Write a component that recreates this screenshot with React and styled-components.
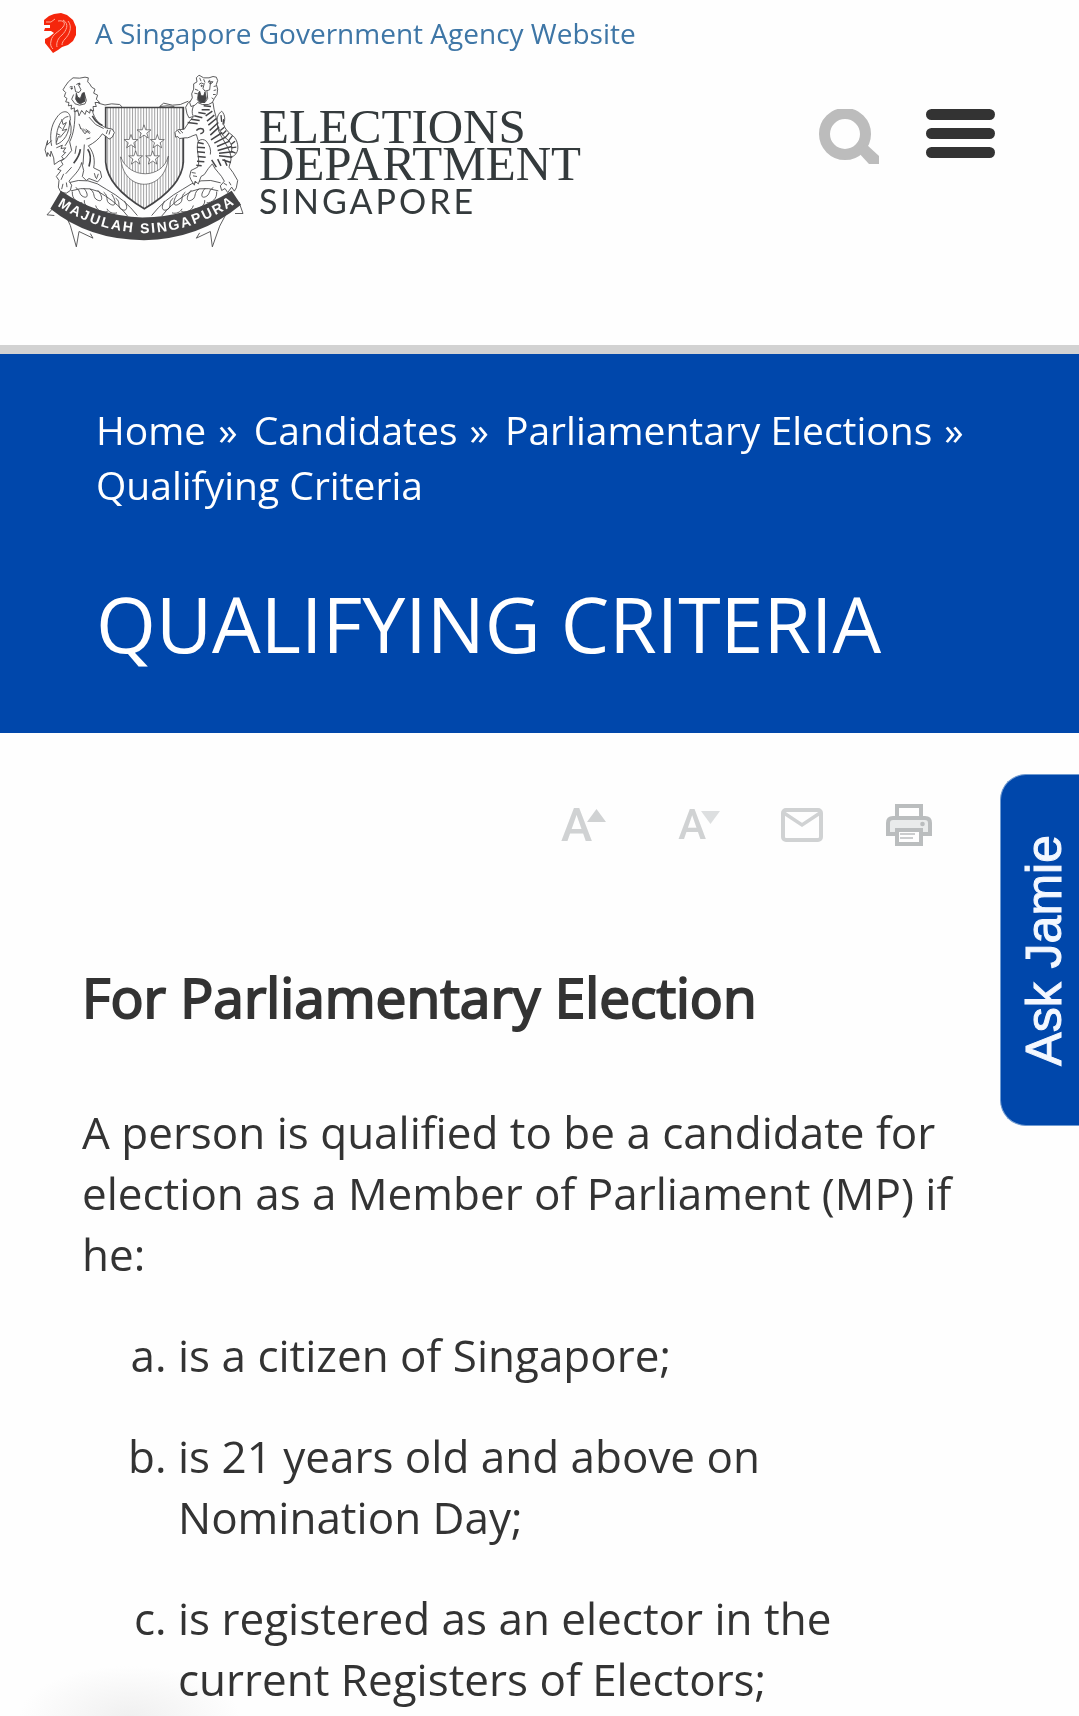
import React from "react";
import styled, { createGlobalStyle } from "styled-components";

const GlobalStyle = createGlobalStyle`
  *, *::before, *::after { box-sizing: border-box; }
  body {
    margin: 0;
    background: #fefefe;
    color: #333;
    font-family: "Open Sans", "Noto Sans", sans-serif;
  }
`;

const Header = styled.header`
  display: flex;
  flex-direction: column;
  height: 354px;
  border-bottom: 9px solid #d2d2d2;
  padding: 0 84px 0 43px;
`;

const AgencyLink = styled.a`
  display: flex;
  align-items: center;
  align-self: flex-start;
  gap: 18px;
  height: 66px;
  color: #3e76a6;
  font-size: 28px;
  text-decoration: none;
`;

const Brand = styled.div`
  display: flex;
  align-items: flex-start;
  justify-content: space-between;
  padding-top: 8px;
`;

const Logo = styled.a`
  display: flex;
  align-items: flex-start;
  gap: 14px;
  color: #343a3c;
  text-decoration: none;
`;

const Wordmark = styled.span`
  display: flex;
  flex-direction: column;
  padding-top: 34px;
  font-family: "Liberation Serif", serif;
  font-size: 49px;
  line-height: 37px;
`;

const Country = styled.span`
  padding-top: 3px;
  font-family: Lato, sans-serif;
  font-size: 34px;
  line-height: 32px;
  letter-spacing: 3px;
`;

const HeaderActions = styled.div`
  display: flex;
  align-items: flex-start;
  gap: 46px;
  padding-top: 35px;
`;

const IconButton = styled.button`
  display: flex;
  align-items: center;
  border: 0;
  padding: 0;
  background: none;
  color: ${(p) => p.$color || "inherit"};
  cursor: pointer;
`;

const Banner = styled.section`
  background: #0047ab;
  color: #fff;
  padding: 48px 96px 67px;
`;

const Crumbs = styled.ol`
  margin: 0;
  padding: 0;
  list-style: none;
  font-size: 39px;
  line-height: 55px;
`;

const Crumb = styled.li`
  display: inline;

  &:not(:last-child)::after {
    content: "»";
    margin: 0 6px 0 12px;
  }

  a {
    color: inherit;
    text-decoration: none;
  }
`;

const Title = styled.h1`
  margin: 70px 0 0;
  font-size: 77px;
  font-weight: 400;
  line-height: 84px;
  text-transform: uppercase;
`;

const Main = styled.main`
  padding: 0 100px 0 82px;
`;

const Tools = styled.div`
  display: flex;
  align-items: center;
  justify-content: flex-end;
  height: 183px;
  padding-right: 47px;
`;

const Tool = styled(IconButton)`
  margin-left: ${(p) => p.$gap || 0}px;
  font-family: Roboto, sans-serif;
  font-size: ${(p) => p.$size || 47}px;
  font-weight: 500;
  line-height: 46px;

  span + svg { margin-left: -5px; }
`;

const Heading = styled.h2`
  margin: 50px 0 74px;
  font-size: 55px;
  font-weight: 400;
  line-height: 62px;
  -webkit-text-stroke: 2px currentColor;
`;

const Text = styled.p`
  margin: 0 0 40px;
  font-size: 44px;
  line-height: 61px;
`;

const Criteria = styled.ol`
  margin: 0;
  padding: 0 0 0 96px;
  list-style: lower-alpha;
  font-size: 44px;
  line-height: 61px;
`;

const Criterion = styled.li`
  & + & { margin-top: 40px; }
`;

const AskJamie = styled.button`
  position: fixed;
  top: 774px;
  right: 0;
  display: flex;
  align-items: center;
  justify-content: center;
  width: 79px;
  height: 352px;
  border: 1px solid #6f9bd2;
  border-right: 0;
  border-radius: 26px 0 0 26px;
  padding: 0 0 0 8px;
  background: #0047ab;
  color: #f4f8ff;
  font-family: "Liberation Sans", Arial, sans-serif;
  font-size: 50px;
  -webkit-text-stroke: 1px currentColor;
  cursor: pointer;

  span {
    writing-mode: vertical-rl;
    transform: rotate(180deg);
  }
`;

const CornerShade = styled.div`
  position: fixed;
  z-index: -1;
  left: 20px;
  bottom: 0;
  width: 220px;
  height: 50px;
  background: radial-gradient(ellipse 110px 50px at 50% 100%, #f0f0f0, #fefefe);
  pointer-events: none;
`;

const star = (cx, cy, r = 22) =>
  Array.from({ length: 10 }, (_, i) => {
    const a = -Math.PI / 2 + (i * Math.PI) / 5;
    const d = i % 2 ? r * 0.4 : r;
    return `${(cx + d * Math.cos(a)).toFixed(1)},${(cy + d * Math.sin(a)).toFixed(1)}`;
  }).join(" ");

function LionHead() {
  return (
    <svg width="34" height="40" viewBox="0 0 34 40" aria-hidden="true">
      <path
        fill="#f5260c"
        d="M1 7 6 3 11 1 18 0 24 2 30 7 33 14 33 22 30 28 25 32 19 34 15 37 10 40 6 35 2 30 2 26 6 24 11 20 8 18 1 18 2 15 7 15 7 12 1 12Z"
      />
      <g fill="none" stroke="#ffab98" strokeWidth="1">
        <path d="M15 8c6-1 8 2 5 6-4 5-11 7-12 14-1 4 0 6 2 8M20 7c7 4 3 11-1 15-4 3-6 8-5 12M25 8c5 6 1 14-3 18-2 2-3 4-3 6" />
        <path d="M3 9l5 0 4-3" />
      </g>
    </svg>
  );
}

function Lion() {
  return (
    <g transform="translate(30 15)">
      <path d="M178 98q20 10 40 2l24 2 8 8" />
      <path fill="#fefefe" d="M108 122C108 160 104 190 92 214L98 240 80 262 66 272 72 282 56 296 66 300 52 318 60 330 58 350 66 366 82 368 94 360 98 344 90 332C102 316 122 302 128 276L134 300 130 318 142 330 150 324 176 334 188 320 184 302 164 292C170 262 160 240 148 226C164 218 180 206 190 190L204 200 210 206 220 200 226 186 220 176 200 172C180 160 166 146 160 120Z" />
      <path d="M82 336l2 14m-12-10-4 16m98-48 4 14m8-12-6 16M206 178l-4 12m12-12-4 14M120 160l6 16m-2-4 10 10m-2-8 12 12m-4-10 14 10M130 180l8 10 6-8 8 8M150 140l20 22 24 12" />
      <path strokeWidth="5" d="M160 136q12 22 30 28M124 236q-2 20-20 42M146 236q14 18 4 52" />
      <path d="M112 226l-4 24M136 222l-4 60M98 290l-18 20M74 310l-8 18M142 206l12-4" />
      <path d="M94 150C96 118 70 116 54 140C34 166 32 200 38 226M88 138C64 140 48 184 52 222C74 214 92 190 92 150M92 150q14 40-14 76" />
      <path d="M68 146l4 16 10-6-12 24 14-4-20 24-6-2-6 18M60 168l8 6M54 190l10 4" />
      <path d="M38 210l-14 14 2-14-8 28 6 20 2-12 8 12 2-16 8 20 2 20 14-10 14-6-6-8 12-12-8-2 8-12-14 2 4-10-18 8" />
      <path fill="#fefefe" d="M78 48L72 58 80 66 76 78 84 84 80 94 90 96 88 106 98 104 96 116 106 112 106 124 116 118 120 136 128 120 138 132 142 120 152 128 154 116 164 122 162 108 172 108 168 96 182 96 172 86 176 74 164 68 168 56 158 50 152 40 146 34 148 22 138 20 122 23 102 22 88 34Z" />
      <path d="M92 50q4-4 10 0m10-8q6-6 12 0M106 46l4 18 10 2 6-8-8-16M104 72l-6 14 10 14 14 4 16-4 4-10-6-22" />
      <circle cx="98" cy="54" r="2" fill="#444446" />
      <circle cx="121" cy="40" r="2" fill="#444446" />
      <path fill="#444446" d="M112 68l4 12 8 4 6-16 6-2 2 26-14 8-8-4-6-10Z" />
    </g>
  );
}

function Tiger() {
  return (
    <g transform="translate(390 15)">
      <path d="M2 108l12-10 26 6 24-2 24-10M2 108l22-2 22 2" />
      <path d="M176 164C170 140 180 128 188 122C200 134 198 150 194 162C198 176 208 186 222 196C238 210 240 236 232 248C224 262 210 260 212 250C222 240 222 220 204 206C190 196 180 180 176 164Z" />
      <path strokeWidth="4" d="M186 134l2 20m6-8-2 16m-8 18 12-10m-6 22 12-12m-4 22 12-14m-2 24 12-16m-4 26 12-10m-12 20 16-2m-16 12 14 6" />
      <path fill="#fefefe" d="M162 96C164 124 176 146 176 170C180 200 218 232 216 268L210 290 222 306 236 330 232 352 226 362 218 350 206 366 198 354 188 360 184 346 196 332C186 310 168 300 160 280L148 294 136 312 126 318 118 340 108 332 106 344 96 328 92 318 96 300 116 290C126 270 108 236 118 212L112 192C96 196 90 204 78 202L62 204 56 198 50 200 48 186 56 178 76 176C86 160 96 146 104 138C96 128 100 110 108 96Z" />
      <path d="M56 180l8 10m-2-12 10 10M98 306l12 2m-8 8 12 2m80 20 10 6m6-10 6 10M84 130l-4-20 8-14 16-10M84 130l6 12 12-4M118 212q12-10 24 0 16 20 12 40" />
      <path fill="#fefefe" d="M120 14L134 22 150 22 162 18 172 20 176 30 172 42 176 56 174 72 166 84 160 96 148 102 130 102 116 96 108 104 96 108 92 96 100 82 98 70 104 56 104 40 114 34 112 22Z" />
      <path d="M120 42q6-8 14-2m14-6q8-4 14 2M136 38l-4 16 6 8 14-4 2-18M122 22l4 10m8-6 4 10m14-8-4 8m14-4-6 8M108 56l10 4m-12 8 10 2m48-22 8-2m-8 14 8-2m-10 14 8 0m-12 10 6 4" />
      <circle cx="128" cy="46" r="2" fill="#444446" />
      <circle cx="154" cy="38" r="2" fill="#444446" />
      <path fill="#444446" d="M118 68l4-6 4 14 8 0 4-12 4 20-6 12-14-2-6-10Z" />
      <path d="M114 86l8 10 16 0 8-12-2-22" />
      <path strokeWidth="4.5" d="M134 106l22 2m-28 10 24 0m-34 8 22 4m-34 6 24 6m-34 4 26 4m-36 6 30 4M160 122l-20 14m26-2-22 18m28-8-24 20m30-8-26 24m28-10-26 24m36-8-34 22m44-8-34 18m46-6-38 16m44 0-42 12m46 4-42 4m40 12-40-4m36 20-26-8M116 216l18 4m-20 10 24 2m-24 12 24 2m-22 12 24 2m-26 12 22 2m-24 10 16 2M112 180q10-10 20-4 6 10-8 14M158 268l14 22m4-24 10 20m10-20 8 20" />
    </g>
  );
}

function Crest() {
  return (
    <svg width="202" height="175" viewBox="42 26 606 524" fill="none" stroke="#444446" strokeWidth="2.6" strokeLinejoin="round" role="img" aria-label="Coat of arms">
      <defs>
        <path id="motto" d="M84 420Q205 498 345 503Q490 500 622 412" />
        <clipPath id="shield">
          <path d="M230 126H463V290C460 345 410 392 346 430C282 392 234 345 230 290Z" />
        </clipPath>
      </defs>
      {/* foliage below the shield */}
      <path d="M118 352q60-22 115 20 55 30 92 78M126 376q60-20 104 16 40 26 66 60M575 352q-60-22-115 20-55 30-92 78M568 376q-60-20-104 16-40 26-66 60" />
      <path d="M140 366c16 8 8 22 24 28s12-14 0-26m18 2c20 12 6 26 24 34s14-16 0-30m18 6c18 14 2 26 20 36s18-10 4-30m12 12c18 12 2 26 18 34s20-8 8-26M130 378c-2 22 14 34 30 34m6-8c-2 16 14 26 30 26m4-10c4 16 22 22 36 18m-2-8c4 10 18 16 30 12" />
      <path d="M553 366c-16 8-8 22-24 28s-12-14 0-26m-18 2c-20 12-6 26-24 34s-14-16 0-30m-18 6c-18 14-2 26-20 36s-18-10-4-30m-12 12c-18 12-2 26-18 34s-20-8-8-26M563 378c2 22-14 34-30 34m-6-8c2 16-14 26-30 26m-4-10c-4 16-22 22-36 18m2-8c-4 10-18 16-30 12" />
      {/* shield */}
      <g clipPath="url(#shield)">
        <path fill="#fefefe" stroke="none" d="M228 124h240v310H228Z" />
        <path strokeWidth="1.5" d={Array.from({ length: 28 }, (_, i) => `M${236 + i * 8.3} 126V432`).join("")} />
      </g>
      <path fill="#fefefe" strokeWidth="2" d="M275 274C280 384 412 384 418 272C400 342 300 342 275 274Z" />
      <g fill="#fefefe" strokeWidth="2">
        <polygon points={star(345, 200)} />
        <polygon points={star(306, 229)} />
        <polygon points={star(385, 229)} />
        <polygon points={star(320, 278)} />
        <polygon points={star(371, 278)} />
      </g>
      <path strokeWidth="5" strokeLinejoin="miter" d="M230 126H463V290C460 345 410 392 346 430C282 392 234 345 230 290Z" />
      <Lion />
      <Tiger />
      {/* ribbon */}
      <path d="M76 424l-22 24 22 2M110 450l14 30 18 64 8-46 42 20-8-14M630 410l12 34-24 0M590 448l-18 34-22 62-6-46-42 20 10-16" />
      <path fill="#444446" stroke="none" d="M96 376Q205 452 340 456Q480 456 608 376L636 418Q510 522 345 524Q180 524 64 430Z" />
      <text fill="#fefefe" stroke="none" fontFamily="Liberation Sans Narrow, Liberation Sans, Arial, sans-serif" fontWeight="700" fontSize="42" letterSpacing="6" textAnchor="middle">
        <textPath href="#motto" startOffset="50%">MAJULAH SINGAPURA</textPath>
      </text>
    </svg>
  );
}

function SearchIcon() {
  return (
    <svg width="61" height="56" viewBox="0 0 61 56" aria-hidden="true">
      <circle cx="26" cy="25" r="20.5" fill="none" stroke="#bcbcbc" strokeWidth="11" />
      <path d="M38 42l9-7 13 12v8H50Z" fill="#bcbcbc" />
    </svg>
  );
}

function MenuIcon() {
  return (
    <svg width="69" height="49" viewBox="0 0 69 49" fill="#333" aria-hidden="true">
      {[0, 19, 38].map((y) => (
        <rect key={y} y={y} width="69" height="11" rx="5.5" />
      ))}
    </svg>
  );
}

function Triangle({ down }) {
  return (
    <svg width="19" height="34" viewBox="0 0 19 34" aria-hidden="true">
      <path d={down ? "M0 3H19L9.5 16Z" : "M0 14H19L9.5 1Z"} fill={down ? "#dddfe0" : "#d0d2d3"} />
    </svg>
  );
}

function MailIcon() {
  return (
    <svg width="42" height="34" viewBox="0 0 42 34" fill="none" stroke="#d0d2d3" strokeWidth="4" aria-hidden="true">
      <rect x="2" y="2" width="38" height="30" rx="3" />
      <path d="M3 5l18 12L39 5" strokeWidth="3.5" />
    </svg>
  );
}

function PrintIcon() {
  return (
    <svg width="46" height="42" viewBox="0 0 46 42" fill="none" stroke="#babdbe" strokeWidth="4" aria-hidden="true">
      <path fill="#fefefe" d="M11 14V2H35V14" />
      <path fill="#e9ebeb" d="M11 30H2V19Q2 14 7 14H39Q44 14 44 19V30H35" />
      <path fill="#fefefe" d="M11 26H35V40H11Z" />
      <path strokeWidth="1.5" d="M14 30H29M14 34H27" />
      <circle cx="36.5" cy="20" r="2.3" fill="#babdbe" stroke="none" />
    </svg>
  );
}

const crumbs = ["Home", "Candidates", "Parliamentary Elections"];
const criteria = [
  "is a citizen of Singapore;",
  "is 21 years old and above on Nomination Day;",
  "is registered as an elector in the current Registers of Electors;",
];

export default function App() {
  return (
    <>
      <GlobalStyle />
      <Header>
        <AgencyLink href="#gov">
          <LionHead />
          A Singapore Government Agency Website
        </AgencyLink>
        <Brand>
          <Logo href="#home">
            <Crest />
            <Wordmark>
              <span>ELECTIONS</span>
              <span>DEPARTMENT</span>
              <Country>SINGAPORE</Country>
            </Wordmark>
          </Logo>
          <HeaderActions>
            <IconButton aria-label="Search"><SearchIcon /></IconButton>
            <IconButton aria-label="Menu"><MenuIcon /></IconButton>
          </HeaderActions>
        </Brand>
      </Header>
      <Banner>
        <nav aria-label="Breadcrumb">
          <Crumbs>
            {crumbs.map((name) => (
              <React.Fragment key={name}>
                <Crumb><a href={"#" + name.toLowerCase().replace(" ", "-")}>{name}</a></Crumb>{" "}
              </React.Fragment>
            ))}
            <Crumb>Qualifying Criteria</Crumb>
          </Crumbs>
        </nav>
        <Title>Qualifying Criteria</Title>
      </Banner>
      <Main>
        <Tools>
          <Tool $color="#d0d2d3" aria-label="Increase text size"><span>A</span><Triangle /></Tool>
          <Tool $color="#d0d2d3" $gap={72} $size={42} aria-label="Decrease text size"><span>A</span><Triangle down /></Tool>
          <Tool $gap={61} aria-label="Email this page"><MailIcon /></Tool>
          <Tool $gap={63} aria-label="Print this page"><PrintIcon /></Tool>
        </Tools>
        <Heading>For Parliamentary Election</Heading>
        <Text>A person is qualified to be a candidate for election as a Member of Parliament (MP) if he:</Text>
        <Criteria>
          {criteria.map((item) => (
            <Criterion key={item}>{item}</Criterion>
          ))}
        </Criteria>
      </Main>
      <AskJamie><span>Ask Jamie</span></AskJamie>
      <CornerShade />
    </>
  );
}
